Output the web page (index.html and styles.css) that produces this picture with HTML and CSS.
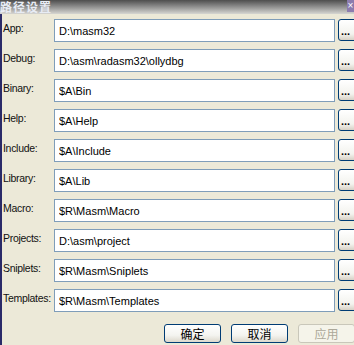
FILE: index.html
```html
<!DOCTYPE html>
<html lang="zh-CN">
<head>
    <meta charset="UTF-8">
    <title>路径设置</title>
    <link rel="stylesheet" href="styles.css">
</head>
<body>
    <div class="window">
        <div class="titlebar">
            <span class="title">路径设置</span>
            <span class="close">×</span>
        </div>
        <div class="content">
            <div class="paths">
                <label>App:</label><input type="text" value="D:\masm32"><button class="browse">...</button>
                <label>Debug:</label><input type="text" value="D:\asm\radasm32\ollydbg"><button class="browse">...</button>
                <label>Binary:</label><input type="text" value="$A\Bin"><button class="browse">...</button>
                <label>Help:</label><input type="text" value="$A\Help"><button class="browse">...</button>
                <label>Include:</label><input type="text" value="$A\Include"><button class="browse">...</button>
                <label>Library:</label><input type="text" value="$A\Lib"><button class="browse">...</button>
                <label>Macro:</label><input type="text" value="$R\Masm\Macro"><button class="browse">...</button>
                <label>Projects:</label><input type="text" value="D:\asm\project"><button class="browse">...</button>
                <label>Sniplets:</label><input type="text" value="$R\Masm\Sniplets"><button class="browse">...</button>
                <label>Templates:</label><input type="text" value="$R\Masm\Templates"><button class="browse">...</button>
            </div>
            <div class="actions">
                <button class="btn">确定</button>
                <button class="btn">取消</button>
                <button class="btn" disabled>应用</button>
            </div>
        </div>
    </div>
</body>
</html>
```

FILE: styles.css
```css
html, body { margin: 0; padding: 0; background: #ece9d8; overflow: hidden; }
body { width: 354px; height: 345px; font-family: "Liberation Sans", Arial, "Noto Sans CJK SC", sans-serif; font-size: 11px; color: #000; }

.window { width: 354px; height: 345px; overflow: hidden; }
.titlebar { height: 14px; position: relative; background: linear-gradient(to bottom, #4e4e4e 0%, #8a8a8a 45%, #d6d6d2 100%); overflow: hidden; }
.title { display: block; font-family: "Noto Sans CJK SC", sans-serif; font-weight: bold; font-size: 12px; line-height: 14px; letter-spacing: 1px; color: #e8ecf4; }
.close { position: absolute; right: 0; top: 0; width: 7px; height: 12px; background: #8c7cae; color: #fff; font-size: 10px; line-height: 12px; text-align: center; overflow: hidden; }

.content { height: 331px; border-left: 2px solid #2a2a68; box-sizing: border-box; padding: 5px 0 0 1px; }

.paths { display: grid; grid-template-columns: 51px 281px 21px; row-gap: 7px; }
.paths label { height: 23px; line-height: 18px; font-size: 10.5px; letter-spacing: -0.3px; white-space: nowrap; color: #111; }
.paths input { height: 23px; width: 281px; box-sizing: border-box; margin: 0; border: 1px solid #7f9db9; padding: 0 4px; font-family: inherit; font-size: 11px; color: #000; background: #fff; outline: none; }
.browse { height: 22px; width: 22px; margin: 0 0 0 3px; padding: 0 0 0 2px; box-sizing: border-box; border: 1px solid #003c74; border-radius: 3px; background: linear-gradient(to bottom, #ffffff 0%, #f3f3ee 70%, #d6d0c5 100%); font-family: inherit; font-size: 11px; font-weight: bold; line-height: 22px; text-align: left; color: #000; }

.actions { display: flex; justify-content: flex-end; gap: 10px; margin-top: 12px; margin-right: -1px; }
.btn { width: 57px; height: 19px; margin: 0; padding: 0; box-sizing: border-box; border: 1px solid #003c74; border-radius: 3px; background: linear-gradient(to bottom, #ffffff 0%, #f4f4f0 60%, #dcd8cc 100%); font-family: "Noto Sans CJK SC", sans-serif; font-size: 12px; line-height: 16px; color: #000; }
.btn:disabled { border-color: #c9c7ba; background: #f5f4ea; color: #aca899; }
```
